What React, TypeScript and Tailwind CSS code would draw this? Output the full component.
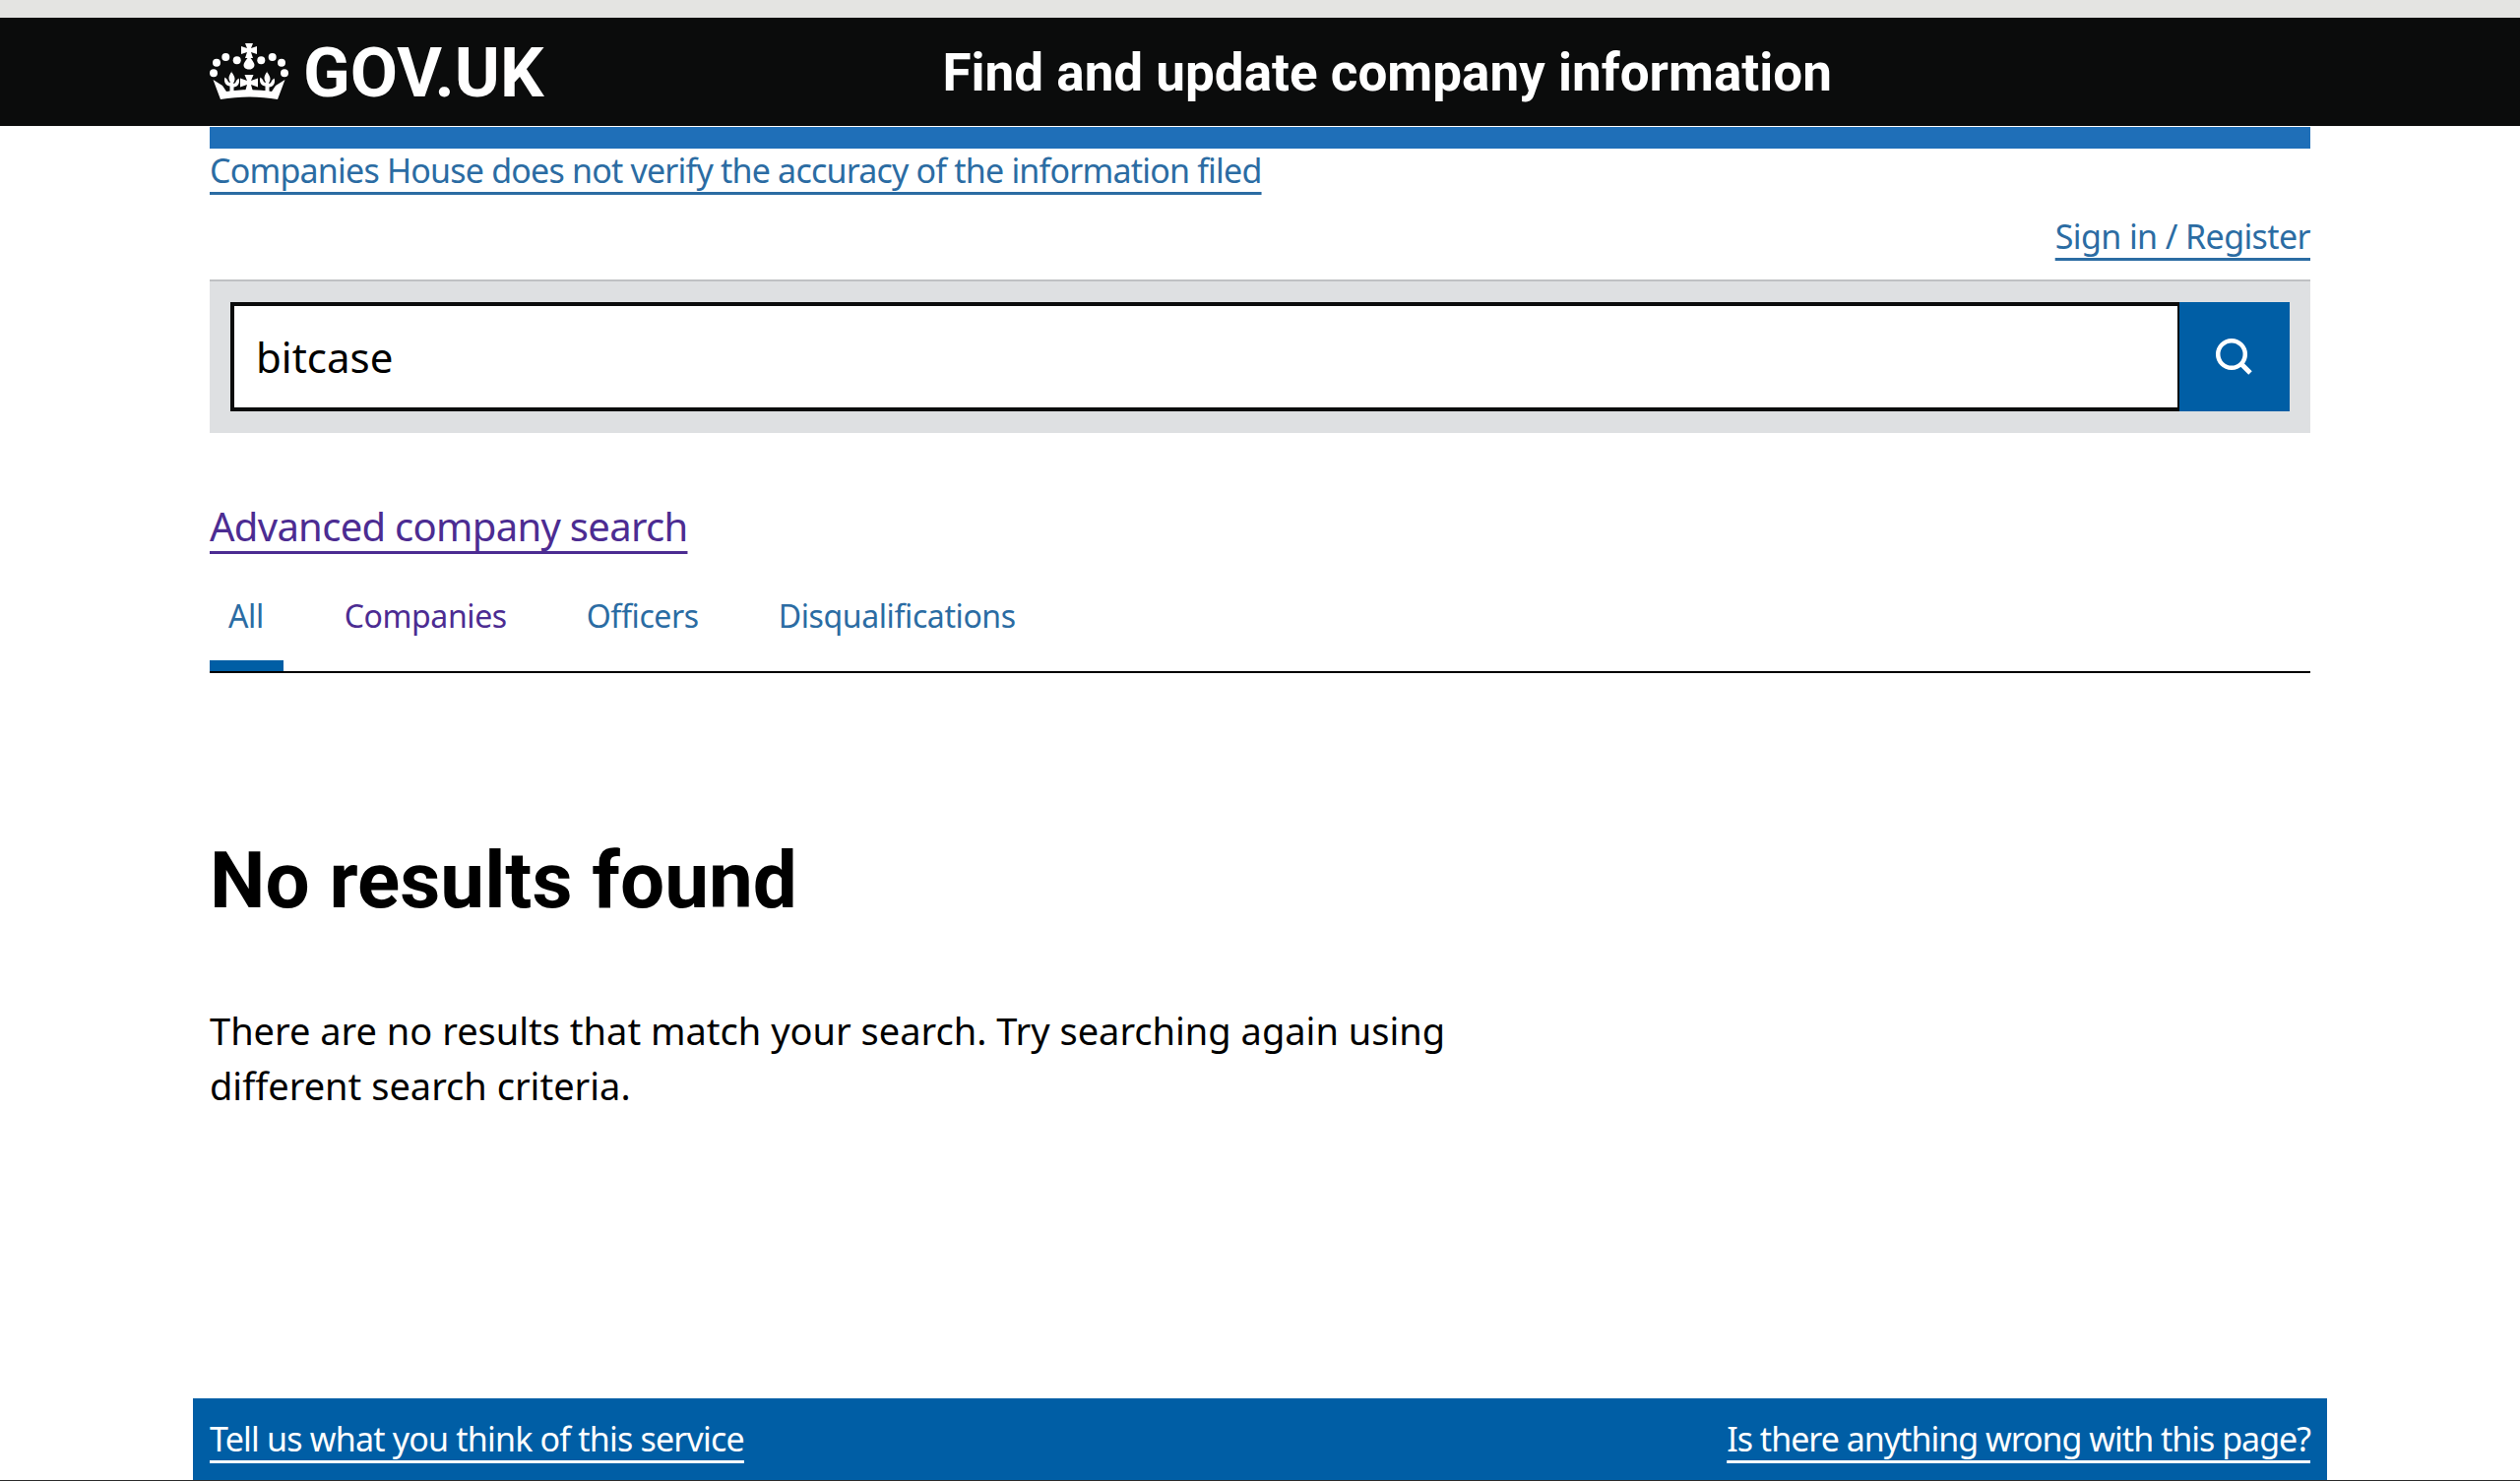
const tabs = [
  { label: "All", className: "text-[#2b6ca3] pr-[20px]", active: true },
  { label: "Companies", className: "text-[#4c2c92] pr-[19px]", active: false },
  { label: "Officers", className: "text-[#2b6ca3] pr-[19px]", active: false },
  { label: "Disqualifications", className: "text-[#2b6ca3] pr-[19px]", active: false },
];

function Fleur({ x }: { x: number }) {
  return (
    <path
      transform={`translate(${x} 0)`}
      d="M0 29c2 2.500 3.500 5 3.500 7 0 2-1 3.500-1.500 5 1.500 0 2.500-1 3-3 1-1 2-2 2.500-2.500 1 2 .5 5-.5 6.500-1 1.500-2.500 2.500-4.500 2.500V50h-4v-6.500c-2 0-3.500-1-4.500-2.500-1-1.500-1.500-4.500-.5-6.500.5.500 1.500 1.500 2.500 2.500.5 2 1.500 3 3 3-.5-1.500-1.500-3-1.500-5 0-2 1.500-4.500 3.500-7z"
    />
  );
}

function Crown() {
  return (
    <svg viewBox="0 0 80 58" className="h-[58px] w-[80px] fill-white">
      {/* cross and drop */}
      <path d="M36 0h8l-2 5 6-2v8l-6-2 2 6h-8l2-6-6 2V3l6 2z" />
      <path d="M40 13c3 4 5.500 7 5.500 9 0 3-2.500 4.500-5.500 4.500s-5.500-1.500-5.500-4.500c0-2 2.500-5 5.500-9z" />
      <circle cx="16.300" cy="14" r="4" />
      <circle cx="27.700" cy="17.300" r="4" />
      <circle cx="52.300" cy="17.300" r="4" />
      <circle cx="63.700" cy="14" r="4" />
      <circle cx="7" cy="19.700" r="4" />
      <circle cx="73" cy="19.700" r="4" />
      <circle cx="4" cy="30.300" r="4" />
      <circle cx="76" cy="30.300" r="4" />
      <Fleur x={22} />
      <Fleur x={58} />
      <path d="M35.500 32h9L42 38l7-2.500v9L42 42l2 7h-8l2-7-7 2.500v-9l7 2.500z" />
      {/* sides and band */}
      <path d="M3.500 37l9.500 6 4 6c15-2.500 31-2.500 46 0l4-6 9.500-6L69 57c-19-3.500-39-3.500-58 0z" />
    </svg>
  );
}

export default function App() {
  return (
    <div className="flex h-[1505px] flex-col overflow-hidden bg-white font-['Noto_Sans',sans-serif] text-black">
      <div className="h-[18px] bg-[#e4e4e2]"></div>
      <header className="flex h-[110px] items-center bg-[#0b0c0c] pl-[213px] text-white">
        <Crown />
        <span className="ml-[15px] mt-[2px] font-['Roboto',sans-serif] text-[70px] font-bold leading-none">GOV.UK</span>
        <span className="ml-[405px] mt-[2px] font-['Roboto',sans-serif] text-[53px] font-bold leading-none">
          Find and update company information
        </span>
      </header>

      <main className="mx-[213px] flex flex-1 flex-col">
        <div className="mt-px h-[22px] bg-[#1f6fb8]"></div>
        <a href="#" className="mt-[2px] self-start text-[34px] leading-[40px] tracking-[-0.8px] text-[#2b6ca3] underline decoration-[3px] underline-offset-[9px]">
          Companies House does not verify the accuracy of the information filed
        </a>
        <a href="#" className="mt-[27px] self-end text-[34px] leading-[40px] tracking-[-0.6px] text-[#2b6ca3] underline decoration-[3px] underline-offset-[9px]">
          Sign in / Register
        </a>

        <div className="mt-[24px] flex border-t-2 border-[#bfc1c3] bg-[#dee0e2] p-[21px] pb-[22px]">
          <div className="flex h-[111px] flex-1 items-center border-[4px] border-r-2 border-[#0b0c0c] bg-white pl-[22px] text-[42px]">
            bitcase
          </div>
          <button className="flex h-[111px] w-[112px] items-center justify-center bg-[#005ea5]">
            <svg viewBox="0 0 40 40" className="h-[40px] w-[40px] fill-none stroke-white">
              <circle cx="17" cy="17" r="13.800" strokeWidth="4.500" />
              <path d="M27 27l9 9" strokeWidth="5" />
            </svg>
          </button>
        </div>

        <a href="#" className="mt-[71px] self-start text-[40px] leading-[48px] tracking-[-0.7px] text-[#4c2c92] underline decoration-[3px] underline-offset-[10px]">
          Advanced company search
        </a>

        <nav className="mt-[42px] flex h-[83px] gap-[43px] border-b-2 border-black">
          {tabs.map((tab) => (
            <a
              key={tab.label}
              href="#"
              className={`flex h-[81px] items-start pl-[19px] pt-[1px] text-[32px] tracking-[-0.4px] ${tab.className} ${tab.active ? "border-b-[11px] border-[#005ea5]" : ""}`}
            >
              {tab.label}
            </a>
          ))}
        </nav>

        <h1 className="mt-[163px] font-['Roboto',sans-serif] text-[80px] font-bold leading-[96px]">No results found</h1>
        <p className="mt-[76px] w-[1300px] text-[38px] leading-[56px]">
          There are no results that match your search. Try searching again using different search criteria.
        </p>
      </main>

      <footer className="mx-[196px] flex h-[83px] items-center justify-between bg-[#005ea5] px-[17px] text-[34px] text-white">
        <a href="#" className="tracking-[-0.8px] underline decoration-[3px] underline-offset-[9px]">Tell us what you think of this service</a>
        <a href="#" className="tracking-[-1px] underline decoration-[3px] underline-offset-[9px]">Is there anything wrong with this page?</a>
      </footer>
      <div className="h-px bg-[#2b2b2b]"></div>
    </div>
  );
}
